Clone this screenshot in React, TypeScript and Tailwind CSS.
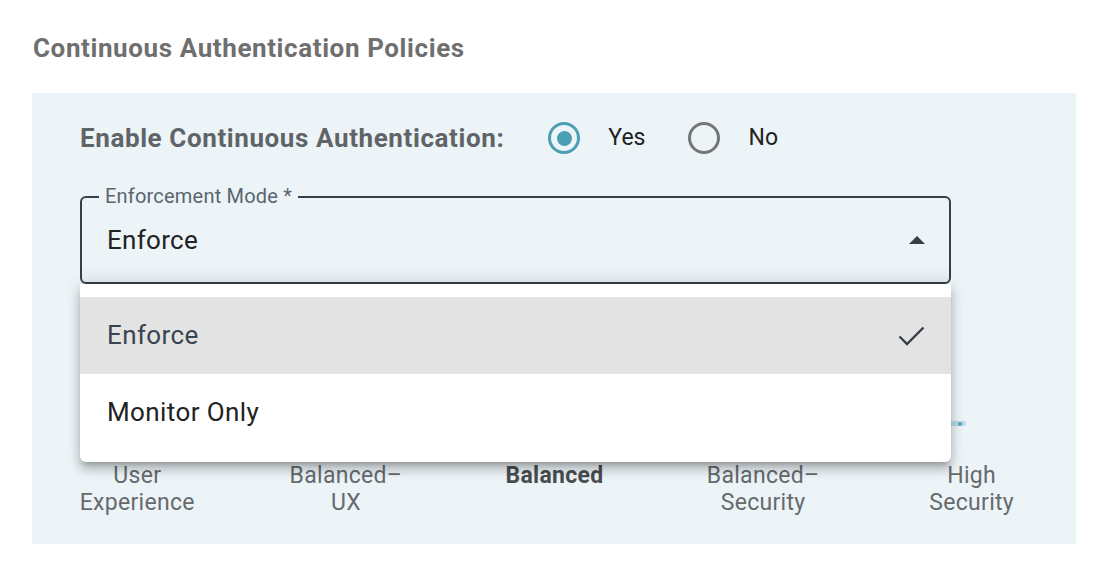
import React, { useState } from 'react';

const LEVELS = [
  { lines: ['User', 'Experience'] },
  { lines: ['Balanced–', 'UX'] },
  { lines: ['Balanced'], active: true },
  { lines: ['Balanced–', 'Security'] },
  { lines: ['High', 'Security'] },
];

const MODES = ['Enforce', 'Monitor Only'];

function Radio({ checked, label }: { checked: boolean; label: string }) {
  return (
    <label className="flex items-center cursor-pointer">
      <span
        className={
          checked
            ? 'flex h-[32px] w-[32px] items-center justify-center rounded-full border-[3px] border-[#4a9fb5]'
            : 'flex h-[32px] w-[32px] items-center justify-center rounded-full border-[3px] border-[#757575]'
        }
      >
        {checked && <span className="h-[15px] w-[15px] rounded-full bg-[#4a9fb5]" />}
      </span>
      <span className="ml-[28px] text-[23px] text-[#222]">{label}</span>
    </label>
  );
}

export default function App() {
  const [enabled, setEnabled] = useState(true);
  const [mode] = useState('Enforce');

  return (
    <div className="h-[584px] w-[1102px] bg-white font-['Roboto','Liberation_Sans',sans-serif]">
      {/* Header */}
      <h2 className="pl-[33px] pt-[32px] text-[26px] font-bold leading-[32px] tracking-[0.6px] text-[#6f6f6f]">
        Continuous Authentication Policies
      </h2>

      {/* Policy panel */}
      <div className="ml-[32px] mt-[29px] h-[451px] w-[1044px] bg-[#ecf4f7] pl-[48px] pt-[29px]">
        <div className="flex h-[32px] items-center" onClick={() => setEnabled(!enabled)}>
          <span className="text-[26px] font-bold tracking-[0.6px] text-[#606468]">
            Enable Continuous Authentication:
          </span>
          <div className="ml-[44px] flex items-center gap-[43px]">
            <Radio checked={enabled} label="Yes" />
            <Radio checked={!enabled} label="No" />
          </div>
        </div>

        {/* Enforcement mode select, opened */}
        <div className="relative mt-[42px] w-[871px]">
          <div className="relative flex h-[88px] items-center rounded-[6px] border-2 border-[#373f47] bg-gradient-to-b from-[#ecf4f7] from-80% to-[#e3ebee] pl-[25px] pr-[24px]">
            <span className="absolute left-[17px] top-[-13px] bg-[#ecf4f7] px-[6px] text-[20px] leading-[22px] tracking-[0.2px] text-[#5a6570]">
              Enforcement Mode *
            </span>
            <span className="flex-1 text-[26px] tracking-[0.3px] text-[#222]">{mode}</span>
            <svg width="16" height="8" viewBox="0 0 16 8">
              <path d="M0 8 L8 0 L16 8 Z" fill="#373f47" />
            </svg>
          </div>

          <div className="absolute left-0 top-[88px] z-10 w-[871px] rounded-b-[6px] bg-white pb-[11px] pt-[13px] shadow-[0_5px_5px_-3px_rgba(0,0,0,0.2),0_8px_10px_1px_rgba(0,0,0,0.14),0_3px_14px_2px_rgba(0,0,0,0.12)]">
            {MODES.map((m) => (
              <div
                key={m}
                className={
                  m === mode
                    ? 'flex h-[77px] items-center bg-[#e3e3e3] pl-[27px] pr-[26px] text-[26px] tracking-[0.4px] text-[#3a4450]'
                    : 'flex h-[77px] items-center pl-[27px] pr-[26px] text-[26px] tracking-[0.4px] text-[#222]'
                }
              >
                <span className="flex-1">{m}</span>
                {m === mode && (
                  <svg width="27" height="20" viewBox="0 0 27 20">
                    <path d="M1.5 10.5 L9 18 L25.5 1.5" fill="none" stroke="#373f47" strokeWidth="2.4" />
                  </svg>
                )}
              </div>
            ))}
          </div>

          {/* Risk level slider */}
          <div className="mt-[137px] flex h-[5px] w-[886px] items-center justify-end rounded-full bg-[#bcdbe4] pr-[4px]">
            <span className="h-[4px] w-[4px] rounded-full bg-[#5aa6bb]" />
          </div>
        </div>

        <div className="ml-[-48px] mt-[36px] flex w-[1044px] pl-[1px]">
          {LEVELS.map((l, i) => (
            <div
              key={i}
              className={
                l.active
                  ? 'w-[209px] text-center text-[23px] font-bold leading-[27px] tracking-[0.3px] text-[#4a4d50]'
                  : 'w-[209px] text-center text-[23px] leading-[27px] tracking-[0.3px] text-[#666a6e]'
              }
            >
              {l.lines.map((t) => (
                <div key={t}>{t}</div>
              ))}
            </div>
          ))}
        </div>
      </div>
    </div>
  );
}
